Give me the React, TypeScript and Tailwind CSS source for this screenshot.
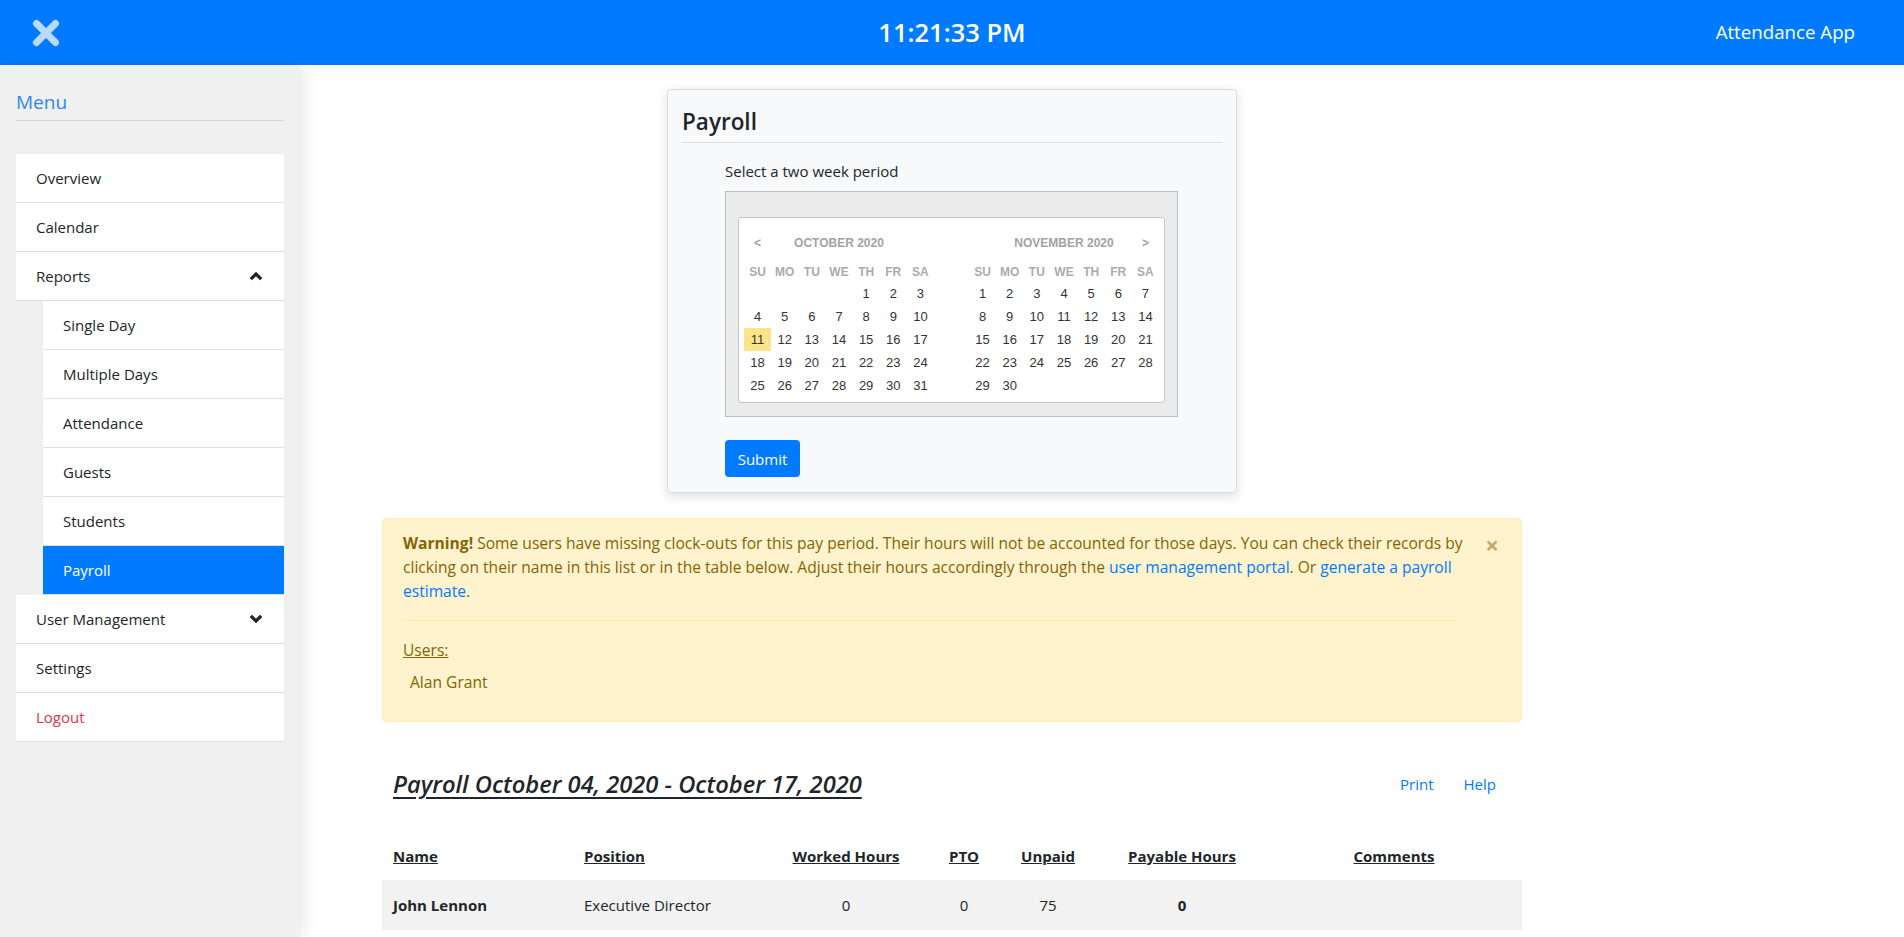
import React from "react";

const HEAD = ["SU", "MO", "TU", "WE", "TH", "FR", "SA"];

function XIcon() {
  return (
    <svg width="28" height="28" viewBox="0 0 28 28">
      <path d="M4.5 4.5 L23.5 23.5 M23.5 4.5 L4.5 23.5" stroke="#b9d9ff" strokeWidth="7" strokeLinecap="round" fill="none" />
    </svg>
  );
}

function Chevron({ up }: { up: boolean }) {
  return (
    <svg width="14" height="10" viewBox="0 0 14 10">
      <polyline
        points={up ? "1.8,8.2 7,3 12.2,8.2" : "1.8,1.8 7,7 12.2,1.8"}
        fill="none"
        stroke="#212529"
        strokeWidth="3.2"
      />
    </svg>
  );
}

function Month({ title, offset, days, arrow, highlight }: { title: string; offset: number; days: number; arrow: "left" | "right"; highlight?: number }) {
  const cells: (number | null)[] = [];
  for (let i = 0; i < offset; i++) cells.push(null);
  for (let d = 1; d <= days; d++) cells.push(d);
  while (cells.length < 35) cells.push(null);
  return (
    <div className="w-[190px]">
      <div className="grid grid-cols-7 h-[21px] items-center text-[12px] font-bold text-[#a3a3a3]">
        <div className="text-center">{arrow === "left" ? "<" : ""}</div>
        <div className="col-span-5 text-center">{title}</div>
        <div className="text-center">{arrow === "right" ? ">" : ""}</div>
      </div>
      <div className="grid grid-cols-7 h-[21px] items-center mt-[8px] text-[12px] font-bold text-[#ababab]">
        {HEAD.map((h) => (
          <div key={h} className="text-center">
            {h}
          </div>
        ))}
      </div>
      <div className="grid grid-cols-7">
        {cells.map((c, i) => (
          <div
            key={i}
            className={
              c !== null && c === highlight
                ? "h-[23px] flex items-center justify-center text-[13px] text-[#333] bg-[#fde38a]"
                : "h-[23px] flex items-center justify-center text-[13px] text-[#333]"
            }
          >
            {c ?? ""}
          </div>
        ))}
      </div>
    </div>
  );
}

type Item = { label: string; sub?: boolean; active?: boolean; chevron?: "up" | "down"; danger?: boolean };

const ITEMS: Item[] = [
  { label: "Overview" },
  { label: "Calendar" },
  { label: "Reports", chevron: "up" },
  { label: "Single Day", sub: true },
  { label: "Multiple Days", sub: true },
  { label: "Attendance", sub: true },
  { label: "Guests", sub: true },
  { label: "Students", sub: true },
  { label: "Payroll", sub: true, active: true },
  { label: "User Management", chevron: "down" },
  { label: "Settings" },
  { label: "Logout", danger: true },
];

function SideItem({ it }: { it: Item }) {
  const base = "h-[49px] flex items-center justify-between pl-[20px] pr-[21px] border-b border-[#dfdfdf] text-[15px] leading-[24px]";
  let cls = base;
  if (it.sub) cls += " ml-[27px]";
  if (it.active) cls += " bg-[#007bff] text-white border-[#007bff]";
  else cls += " bg-white";
  if (it.danger) cls += " text-[#dc3545]";
  else if (!it.active) cls += " text-[#212529]";
  return (
    <div className={cls}>
      <span>{it.label}</span>
      {it.chevron ? <Chevron up={it.chevron === "up"} /> : null}
    </div>
  );
}

export default function App() {
  return (
    <div className="relative w-full min-h-[937px] bg-white font-['Open_Sans',sans-serif] text-[#212529] overflow-hidden">
      {/* Header */}
      <header className="h-[65px] bg-[#007bff] grid grid-cols-3 items-center">
        <div className="pl-[32px] flex items-center">
          <XIcon />
        </div>
        <div className="text-center text-white text-[25.5px] font-semibold leading-none">11:21:33 PM</div>
        <div className="text-right pr-[49px] text-white text-[18.7px] leading-none">Attendance App</div>
      </header>

      {/* Sidebar (drawer overlay) */}
      <aside className="absolute left-0 top-[65px] bottom-0 w-[300px] bg-[#f0f0f0] shadow-[4px_0_14px_rgba(0,0,0,0.09)] z-10">
        <div className="mx-[16px] pt-[25px] pb-[6px] border-b border-[#d6d6d6] text-[19px] leading-[24px] text-[#2f86ff]">Menu</div>
        <div className="mx-[16px] mt-[33px]">
          {ITEMS.map((it) => (
            <SideItem key={it.label} it={it} />
          ))}
        </div>
      </aside>

      {/* Main */}
      <main className="flex flex-col items-center pt-[24px]">
        {/* Payroll card */}
        <div className="w-[570px] bg-[#f8f9fa] border border-[#dcdcdc] rounded-[4px] shadow-[0_3px_12px_rgba(0,0,0,0.14)] px-[14px] pt-[17px] pb-[15px]">
          <h3 className="h-[29px] text-[22.5px] leading-[29px] font-semibold text-[#212529]">Payroll</h3>
          <div className="mt-[6px] border-t border-[#dcdcdc]" />
          <div className="ml-[43px]">
            <div className="mt-[16px] text-[15px] leading-[24px]">Select a two week period</div>
            <div className="mt-[8px] w-[453px] bg-[#ececec] border border-[#bdbdbd] pt-[25px] pl-[12px] pr-[12px] pb-[13px] font-['Liberation_Sans',Arial,sans-serif]">
              <div className="w-[427px] bg-white border border-[#c6c6c6] rounded-[3px] px-[5px] pt-[14px] pb-[5px] flex gap-[35px]">
                <Month title="OCTOBER 2020" offset={4} days={31} arrow="left" highlight={11} />
                <Month title="NOVEMBER 2020" offset={0} days={30} arrow="right" />
              </div>
            </div>
            <button className="mt-[23px] h-[37px] w-[75px] rounded-[4px] bg-[#007bff] text-white text-[15px] leading-[24px]">Submit</button>
          </div>
        </div>

        {/* Warning alert */}
        <div className="relative mt-[25px] w-[1140px] bg-[#fff3cd] border border-[#ffeeba] rounded-[4px] text-[#856404] pl-[20px] pr-[64px] pt-[12px] pb-[12px] text-[15.6px] leading-[24px]">
          <div className="whitespace-nowrap">
            <b>Warning!</b> Some users have missing clock-outs for this pay period. Their hours will not be accounted for those days. You can check their records by
          </div>
          <div className="whitespace-nowrap">
            clicking on their name in this list or in the table below. Adjust their hours accordingly through the{" "}
            <span className="text-[#007bff]">user management portal</span>. Or <span className="text-[#007bff]">generate a payroll</span>
          </div>
          <div className="whitespace-nowrap">
            <span className="text-[#007bff]">estimate</span>.
          </div>
          <div className="mt-[17px] mb-[17px] border-t border-[#ffe8a1]" />
          <div className="underline">Users:</div>
          <div className="mt-[8px] mb-[15px] pl-[7px]">Alan Grant</div>
          <button className="absolute right-[22px] top-[14px] text-[24px] leading-none font-bold text-[#856404] opacity-50">×</button>
        </div>

        {/* Payroll report */}
        <div className="w-[1140px]">
          <div className="mt-[47px] flex items-center justify-between">
            <h3 className="pl-[11px] h-[30px] text-[23.7px] leading-[30px] italic font-semibold underline underline-offset-[4px]">
              Payroll October 04, 2020 - October 17, 2020
            </h3>
            <div className="flex items-center gap-[30px] pr-[26px] text-[15px] text-[#007bff]">
              <span>Print</span>
              <span>Help</span>
            </div>
          </div>
          <div className="mt-[33px] grid grid-cols-[191px_197px_152px_84px_84px_184px_240px_1fr] h-[48px] items-center text-[15px] font-bold">
            <div className="pl-[11px] underline">Name</div>
            <div className="pl-[11px] underline">Position</div>
            <div className="text-center underline">Worked Hours</div>
            <div className="text-center underline">PTO</div>
            <div className="text-center underline">Unpaid</div>
            <div className="text-center underline">Payable Hours</div>
            <div className="text-center underline">Comments</div>
            <div />
          </div>
          <div className="grid grid-cols-[191px_197px_152px_84px_84px_184px_240px_1fr] h-[50px] items-center text-[15px] bg-[#f2f2f2]">
            <div className="pl-[11px] font-bold">John Lennon</div>
            <div className="pl-[11px]">Executive Director</div>
            <div className="text-center">0</div>
            <div className="text-center">0</div>
            <div className="text-center">75</div>
            <div className="text-center font-bold">0</div>
            <div />
            <div />
          </div>
        </div>
      </main>
    </div>
  );
}
